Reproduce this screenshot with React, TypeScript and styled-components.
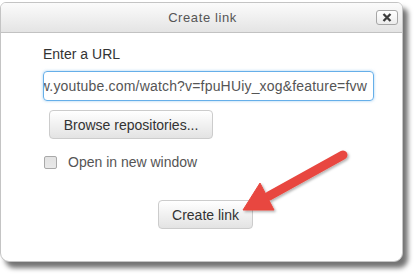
import React from "react";
import styled, { createGlobalStyle } from "styled-components";

const Global = createGlobalStyle`
  html, body { margin: 0; padding: 0; background: #ffffff; }
  body { font-family: "Liberation Sans", Arial, sans-serif; }
  * { box-sizing: border-box; }
`;

const Page = styled.div`
  position: relative;
  width: 418px;
  height: 278px;
  padding-top: 2px;
  overflow: hidden;
`;

const Dialog = styled.div`
  width: 403px;
  height: 260px;
  border: 1px solid #c4c4c4;
  border-radius: 6px 6px 9px 9px;
  background: #ffffff;
  box-shadow: 5px 6px 5px rgba(0, 0, 0, 0.55);
  display: flex;
  flex-direction: column;
  overflow: hidden;
`;

const Header = styled.div`
  height: 30px;
  flex: none;
  display: grid;
  grid-template-columns: 1fr auto 1fr;
  align-items: center;
  background: linear-gradient(#fbfbfb, #e4e4e4);
  border-bottom: 1px solid #c2c2c2;
`;

const Title = styled.div`
  grid-column: 2;
  font-size: 13px;
  letter-spacing: 0.6px;
  color: #555555;
  padding-left: 2px;
`;

const CloseButton = styled.div`
  grid-column: 3;
  justify-self: end;
  margin-right: 4px;
  width: 22px;
  height: 15px;
  border: 1px solid #a6a6a6;
  border-radius: 3px;
  background: linear-gradient(#ffffff, #ececec);
  display: flex;
  align-items: center;
  justify-content: center;
`;

const Body = styled.div`
  display: flex;
  flex-direction: column;
  align-items: flex-start;
  padding: 11px 0 0 42px;
`;

const Label = styled.div`
  font-size: 14px;
  line-height: 20px;
  color: #333333;
`;

const UrlField = styled.div`
  margin-top: 7px;
  width: 331px;
  height: 30px;
  border: 1px solid #66afe9;
  border-radius: 4px;
  box-shadow: 0 0 3px rgba(102, 175, 233, 0.6);
  display: flex;
  align-items: center;
  justify-content: flex-end;
  overflow: hidden;
  padding-right: 6px;
  font-size: 14px;
  letter-spacing: 0.18px;
  color: #555555;
  white-space: nowrap;
`;

const Button = styled.div<{ $w: number; $ml: number; $mt: number }>`
  margin-left: ${(p) => p.$ml}px;
  margin-top: ${(p) => p.$mt}px;
  width: ${(p) => p.$w}px;
  height: 29px;
  border: 1px solid #cccccc;
  border-radius: 4px;
  background: linear-gradient(#ffffff, #e3e3e3);
  display: flex;
  align-items: center;
  justify-content: center;
  font-size: 14px;
  color: #333333;
`;

const CheckRow = styled.div`
  margin-top: 15px;
  display: flex;
  align-items: center;
  gap: 11px;
  padding-left: 1px;
`;

const CheckBox = styled.div`
  width: 13px;
  height: 13px;
  border: 1px solid #a9a9a9;
  border-radius: 2px;
  background: linear-gradient(#e2e2e2, #e9e9e9);
`;

const CheckLabel = styled.span`
  font-size: 14px;
  color: #555555;
`;

const Arrow = styled.svg`
  position: absolute;
  left: 225px;
  top: 140px;
  overflow: visible;
`;

export default function App() {
  return (
    <>
      <Global />
      <Page>
        <Dialog>
          <Header>
            <Title>Create link</Title>
            <CloseButton>
              <svg width="10" height="9" viewBox="0 0 10 9">
                <path d="M1.5 1 L8.5 8 M8.5 1 L1.5 8" stroke="#3c3c3c" strokeWidth="2.3" strokeLinecap="butt" />
              </svg>
            </CloseButton>
          </Header>
          <Body>
            <Label>Enter a URL</Label>
            <UrlField>www.youtube.com/watch?v=fpuHUiy_xog&amp;feature=fvw</UrlField>
            <Button $w={164} $ml={6} $mt={9}>Browse repositories...</Button>
            <CheckRow>
              <CheckBox />
              <CheckLabel>Open in new window</CheckLabel>
            </CheckRow>
            <Button $w={95} $ml={115} $mt={30}>Create link</Button>
          </Body>
        </Dialog>
        <Arrow width="130" height="80" viewBox="0 0 130 80">
          <defs>
            <filter id="sh" x="-20%" y="-20%" width="140%" height="140%">
              <feDropShadow dx="1.5" dy="1.5" stdDeviation="1.2" floodColor="#000" floodOpacity="0.3" />
            </filter>
          </defs>
          <g filter="url(#sh)" fill="#e8473f" stroke="#e8473f">
            <line x1="118" y1="15" x2="44" y2="56" strokeWidth="9" strokeLinecap="round" />
            <polygon points="18,70 35,43 49,70" strokeWidth="1" strokeLinejoin="round" />
          </g>
        </Arrow>
      </Page>
    </>
  );
}
